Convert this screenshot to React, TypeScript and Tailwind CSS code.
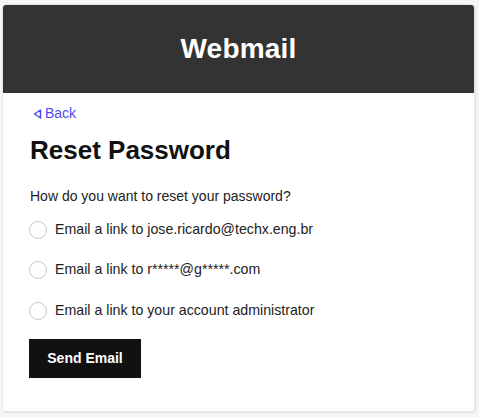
import React from "react";

const options = [
  "Email a link to jose.ricardo@techx.eng.br",
  "Email a link to r*****@g*****.com",
  "Email a link to your account administrator",
];

export default function App() {
  return (
    <div className="min-h-[417px] w-[479px] bg-[#f4f6f7] px-[2px] pt-[4px] pb-[5px]" style={{ fontFamily: '"Liberation Sans", Arial, sans-serif' }}>
      <div className="w-[473px] h-[408px] rounded-[4px] bg-white border border-[#e3e6e8] overflow-hidden shadow-[1px_1px_2px_rgba(0,0,0,0.08)]">
        <div className="h-[88px] bg-[#333333] flex items-center justify-center">
          <h1 className="text-white text-[28px] font-bold tracking-[0.2px]">Webmail</h1>
        </div>
        <div className="pl-[26px] pt-[12px]">
          <a className="flex items-center gap-[3px] text-[#4c4cf0] text-[14px] leading-[16px] ml-[4px]" href="#">
            <svg width="9" height="10" viewBox="0 0 9 10" className="mt-[2px]">
              <path d="M7.5 1 L1.5 5 L7.5 9 Z" fill="none" stroke="#4c4cf0" strokeWidth="1.5" strokeLinejoin="round" />
            </svg>
            Back
          </a>
          <h2 className="mt-[12px] ml-[1px] text-[#111] text-[26px] leading-[34px] font-bold">Reset Password</h2>
          <p className="mt-[20px] ml-[1px] text-[14px] leading-[18px] text-[#222]">How do you want to reset your password?</p>
          <div className="mt-[5px] flex flex-col">
            {options.map((o, i) => (
              <label key={o} className={`flex items-center gap-[8px] ${i === 2 ? "h-[42px]" : "h-[40px]"}`}>
                <span className="w-[18px] h-[18px] rounded-full border border-[#c4c9ce] bg-white" />
                <span className="text-[14.2px] text-[#222]">{o}</span>
              </label>
            ))}
          </div>
          <button className="mt-[7px] w-[112px] h-[39px] bg-[#111111] text-white text-[14px] font-bold">Send Email</button>
        </div>
      </div>
    </div>
  );
}
